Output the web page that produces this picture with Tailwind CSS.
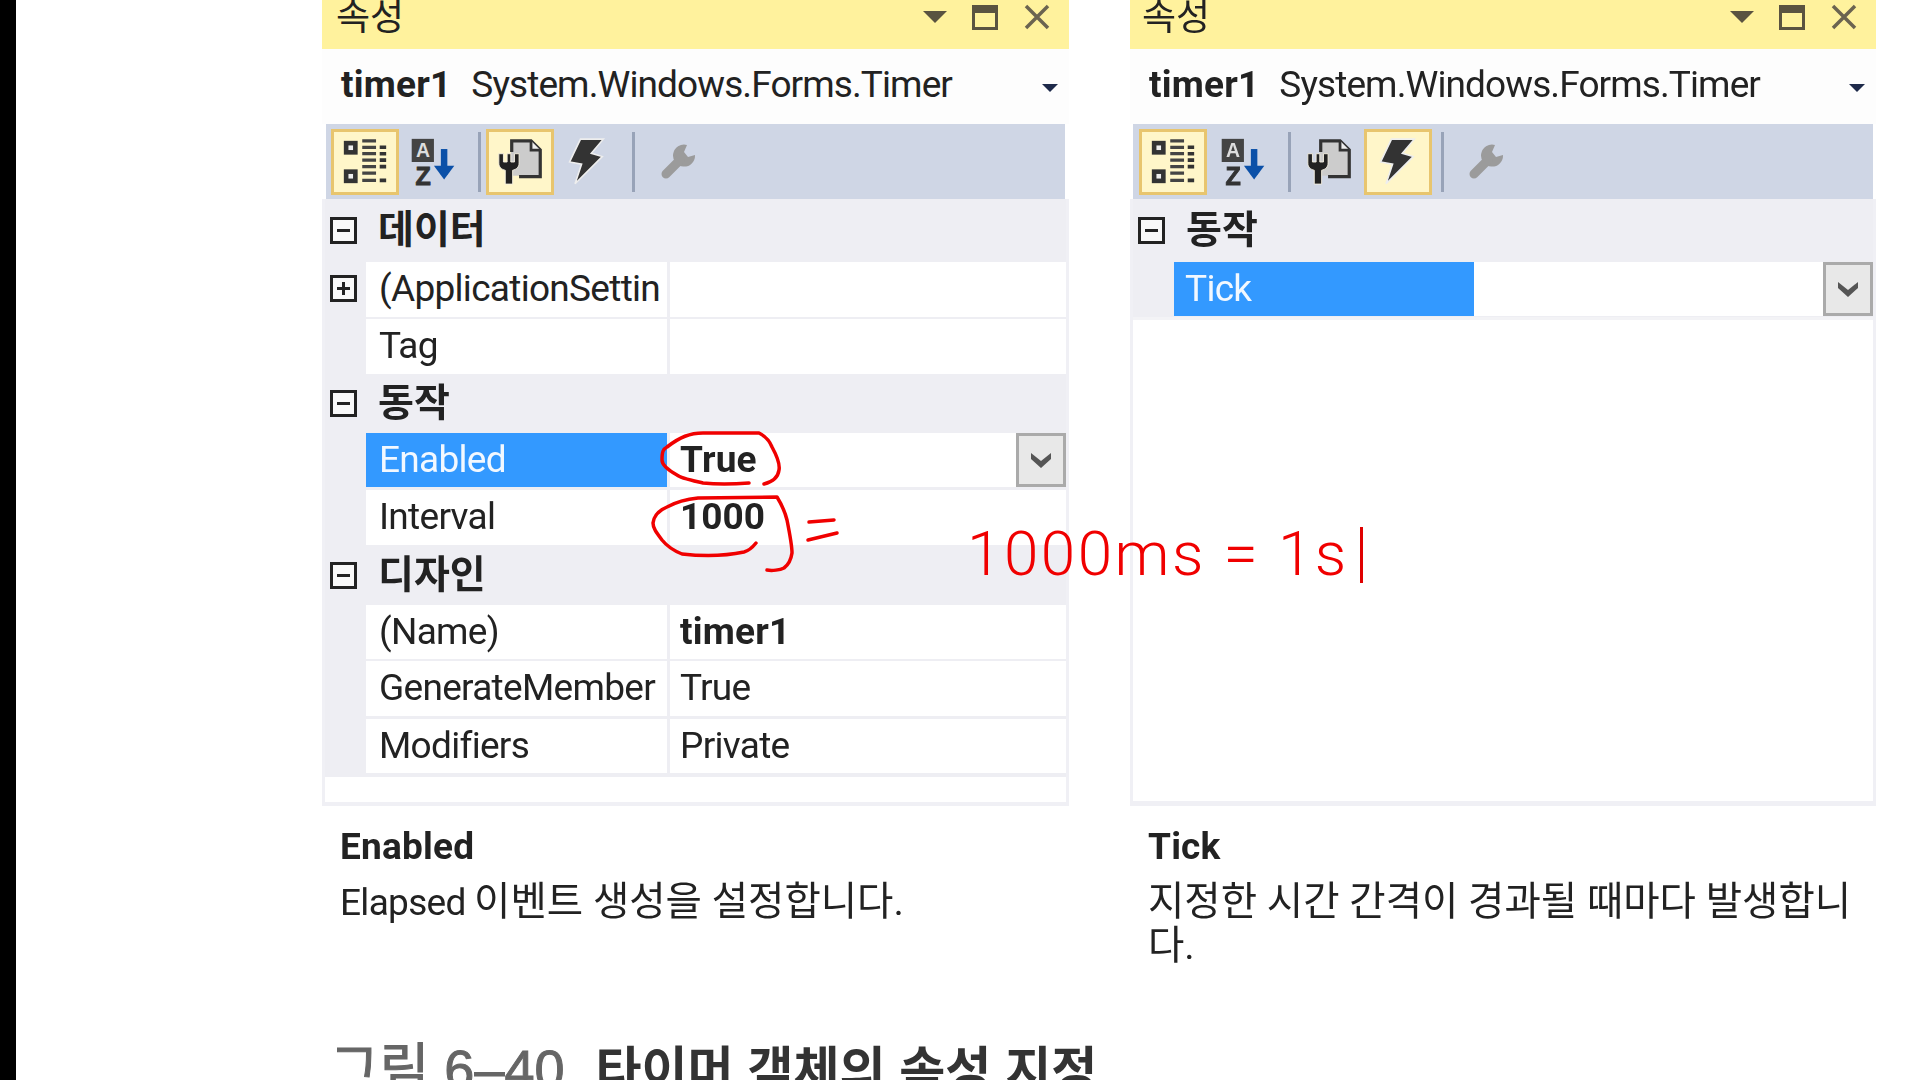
<!DOCTYPE html>
<html lang="ko">
  <head>
    <meta charset="UTF-8" />
    <title>속성</title>
    <script src="https://cdn.jsdelivr.net/npm/@tailwindcss/browser@4"></script>
  </head>
  <body class="relative w-[1920px] h-[1080px] overflow-hidden bg-white font-['Roboto','Noto_Sans_CJK_KR',sans-serif] text-[37px] leading-none tracking-[-0.7px] text-[#222]">
    <svg class="hidden">
      <symbol id="cats" viewBox="0 0 50 54">
        <rect x="2" y="4" width="15" height="15" fill="#333" /><rect x="7" y="9" width="5" height="5" fill="#eee" />
        <rect x="2" y="35" width="15" height="15" fill="#333" /><rect x="7" y="40" width="5" height="5" fill="#eee" />
        <path d="M22 4h15M22 11h15M22 18h15M22 25h15M22 32h15M22 39h15M22 47h15" stroke="#444" stroke-width="3.5" />
        <path d="M41 11h7M41 18h7M41 25h7M41 32h7M41 47h7" stroke="#333" stroke-width="4" />
      </symbol>
      <symbol id="sort" viewBox="0 0 48 54">
        <rect x="1" y="2" width="24" height="25" fill="#444" />
        <text x="13" y="22" text-anchor="middle" font-family="Liberation Sans" font-weight="700" font-size="21" fill="#ddd">A</text>
        <text x="13" y="52" text-anchor="middle" font-family="Liberation Sans" font-weight="700" font-size="27" fill="#333" stroke="#333" stroke-width="1">Z</text>
        <path d="M36 13v28" stroke="#0b50a8" stroke-width="7" /><path d="M25 31h22L36 46z" fill="#0b50a8" />
      </symbol>
      <symbol id="props" viewBox="0 0 50 54">
        <path d="M15 3h22l10 10v29H15z" fill="#ccc" />
        <path d="M16 16V4h21l10 10v29H24" fill="none" stroke="#333" stroke-width="3.5" />
        <path d="M37 4v10h10" fill="#eee" stroke="#333" stroke-width="3" />
        <path d="M2 18v10c0 5 3 7 7 8v15h8V36c4-1 7-3 7-8V18h-5v9h-4v-9h-4v9H7v-9z" fill="#222" stroke="#f4f0e0" stroke-width="1" />
      </symbol>
      <symbol id="bolt" viewBox="0 0 36 46">
        <path d="M12 2H33L22 15 32 18 7 43 13 25 2 23z" fill="#333" stroke="#eee" stroke-width="1.5" />
      </symbol>
      <symbol id="wrench" viewBox="0 0 36 36">
        <path d="M27 1A11 11 0 1 0 35 11L28 13L24 8Z" fill="#9b9b9b" />
        <path d="M6 30L20 16" stroke="#9b9b9b" stroke-width="9" stroke-linecap="round" />
      </symbol>
      <symbol id="chev" viewBox="0 0 22 18">
        <path d="M1 2l10 8 10-8v6l-10 9-10-9z" fill="#555" />
      </symbol>
    </svg>

    <div class="flex h-full blur-[0.5px]">
      <div class="w-4 shrink-0 bg-black"></div>

      <div class="flex items-start pl-[306px]">
        <!-- 왼쪽 속성 창 -->
        <section class="w-[747px] shrink-0">
          <div class="flex h-[49px] items-start justify-between bg-[#fff29d] pl-[14px] pr-[18px] overflow-hidden">
            <span class="-mt-[2px] text-[37px] leading-[40px] tracking-normal">속성</span>
            <div class="flex items-center gap-[25px] pt-[3px]">
              <span class="h-0 w-0 border-x-[12px] border-t-[12px] border-x-transparent border-t-[#5a5340]"></span>
              <span class="h-[25px] w-[26px] border-[3px] border-t-[8px] border-[#5a5340]"></span>
              <svg class="h-[28px] w-[28px]" viewBox="0 0 28 28"><path d="M3 3l22 22M25 3L3 25" stroke="#6b6450" stroke-width="3.5" /></svg>
            </div>
          </div>
          <div class="flex h-[75px] items-center bg-[#fdfdfd] pl-[19px] pr-[11px] pb-[5px]">
            <b class="font-bold tracking-[0.2px]">timer1</b>
            <span class="ml-[20px] flex-1 tracking-[-0.9px]">System.Windows.Forms.Timer</span>
            <span class="mt-[8px] h-0 w-0 border-x-[8px] border-t-[8px] border-x-transparent border-t-[#1e2a4a]"></span>
          </div>
          <div class="mx-[4px] flex h-[75px] items-center bg-[#cfd6e5] pl-[5px]">
            <div class="flex h-[66px] w-[68px] items-center justify-center border-[3px] border-[#e8c56e] bg-[#fff6c9]"><svg class="h-[50px] w-[46px]"><use href="#cats" /></svg></div>
            <svg class="ml-[11px] h-[50px] w-[46px]"><use href="#sort" /></svg>
            <div class="ml-[22px] h-[60px] w-[3px] bg-[#98a3b8]"></div>
            <div class="ml-[5px] flex h-[66px] w-[68px] items-center justify-center border-[3px] border-[#e8c56e] bg-[#fff6c9]"><svg class="h-[50px] w-[46px]"><use href="#props" /></svg></div>
            <svg class="ml-[13px] h-[50px] w-[40px]"><use href="#bolt" /></svg>
            <div class="ml-[25px] h-[60px] w-[3px] bg-[#98a3b8]"></div>
            <svg class="ml-[25px] h-[36px] w-[36px]"><use href="#wrench" /></svg>
          </div>

          <div class="h-[607px] border-x-[3px] border-b-[5px] border-[#f0f0f5] bg-[#eeeef3]">
            <div class="flex h-[63px] items-center">
              <span class="ml-[5px] flex h-[27px] w-[27px] items-center justify-center border-[3px] border-[#222] bg-[#f8f8f8]"><i class="h-[3px] w-[13px] bg-[#222]"></i></span>
              <b class="ml-[21px] text-[39px] font-bold tracking-normal">데이터</b>
            </div>
            <div class="flex h-[55px] items-stretch gap-[3px]">
              <span class="ml-[5px] mt-[13px] flex h-[27px] w-[27px] items-center justify-center border-[3px] border-[#222] bg-[#f8f8f8]">
                <svg class="h-[15px] w-[15px]" viewBox="0 0 15 15"><path d="M1 7.5h13M7.5 1v13" stroke="#222" stroke-width="3" /></svg>
              </span>
              <div class="ml-[6px] flex w-[301px] items-center bg-white pb-[2px] pl-[13px] overflow-hidden whitespace-nowrap">(ApplicationSettin</div>
              <div class="flex-1 bg-white"></div>
            </div>
            <div class="mt-[2px] flex h-[55px] items-stretch gap-[3px]">
              <div class="ml-[41px] flex w-[301px] items-center bg-white pb-[2px] pl-[13px]">Tag</div>
              <div class="flex-1 bg-white"></div>
            </div>
            <div class="flex h-[59px] items-center">
              <span class="ml-[5px] flex h-[27px] w-[27px] items-center justify-center border-[3px] border-[#222] bg-[#f8f8f8]"><i class="h-[3px] w-[13px] bg-[#222]"></i></span>
              <b class="ml-[21px] text-[39px] font-bold tracking-normal">동작</b>
            </div>
            <div class="flex h-[54px] items-stretch gap-[3px]">
              <div class="ml-[41px] flex w-[301px] items-center bg-[#3399ff] pb-[2px] pl-[13px] text-[#f2f8ff]">Enabled</div>
              <div class="flex flex-1 items-center justify-between bg-white pl-[10px]">
                <b class="pb-[2px] font-bold tracking-[0.2px]">True</b>
                <span class="flex h-[54px] w-[50px] items-center justify-center border-[3px] border-[#aaa] bg-[#e8e8e8]"><svg class="h-[18px] w-[22px]"><use href="#chev" /></svg></span>
              </div>
            </div>
            <div class="mt-[3px] flex h-[55px] items-stretch gap-[3px]">
              <div class="ml-[41px] flex w-[301px] items-center bg-white pb-[2px] pl-[13px]">Interval</div>
              <div class="flex flex-1 items-center bg-white pb-[2px] pl-[10px]"><b class="font-bold tracking-normal">1000</b></div>
            </div>
            <div class="flex h-[60px] items-center">
              <span class="ml-[5px] flex h-[27px] w-[27px] items-center justify-center border-[3px] border-[#222] bg-[#f8f8f8]"><i class="h-[3px] w-[13px] bg-[#222]"></i></span>
              <b class="ml-[21px] text-[39px] font-bold tracking-normal">디자인</b>
            </div>
            <div class="flex h-[54px] items-stretch gap-[3px]">
              <div class="ml-[41px] flex w-[301px] items-center bg-white pb-[2px] pl-[13px]">(Name)</div>
              <div class="flex flex-1 items-center bg-white pb-[2px] pl-[10px]"><b class="font-bold tracking-[0.2px]">timer1</b></div>
            </div>
            <div class="mt-[2px] flex h-[55px] items-stretch gap-[3px]">
              <div class="ml-[41px] flex w-[301px] items-center bg-white pb-[2px] pl-[13px] whitespace-nowrap">GenerateMember</div>
              <div class="flex flex-1 items-center bg-white pb-[2px] pl-[10px]">True</div>
            </div>
            <div class="mt-[3px] flex h-[54px] items-stretch gap-[3px]">
              <div class="ml-[41px] flex w-[301px] items-center bg-white pb-[2px] pl-[13px]">Modifiers</div>
              <div class="flex flex-1 items-center bg-white pb-[2px] pl-[10px]">Private</div>
            </div>
            <div class="mt-[4px] h-[25px] bg-white"></div>
          </div>

          <div class="pl-[18px] pt-[19px]">
            <b class="block font-bold leading-[44px] tracking-[0.2px]">Enabled</b>
            <p class="mt-[11px] leading-[44px]">Elapsed <span class="text-[39.5px] tracking-normal">이벤트 생성을 설정합니다.</span></p>
          </div>
        </section>

        <!-- 오른쪽 속성 창 -->
        <section class="ml-[61px] w-[746px] shrink-0">
          <div class="flex h-[49px] items-start justify-between bg-[#fff29d] pl-[12px] pr-[18px] overflow-hidden">
            <span class="-mt-[2px] text-[37px] leading-[40px] tracking-normal">속성</span>
            <div class="flex items-center gap-[25px] pt-[3px]">
              <span class="h-0 w-0 border-x-[12px] border-t-[12px] border-x-transparent border-t-[#5a5340]"></span>
              <span class="h-[25px] w-[26px] border-[3px] border-t-[8px] border-[#5a5340]"></span>
              <svg class="h-[28px] w-[28px]" viewBox="0 0 28 28"><path d="M3 3l22 22M25 3L3 25" stroke="#6b6450" stroke-width="3.5" /></svg>
            </div>
          </div>
          <div class="flex h-[75px] items-center bg-[#fdfdfd] pl-[19px] pr-[11px] pb-[5px]">
            <b class="font-bold tracking-[0.2px]">timer1</b>
            <span class="ml-[20px] flex-1 tracking-[-0.9px]">System.Windows.Forms.Timer</span>
            <span class="mt-[8px] h-0 w-0 border-x-[8px] border-t-[8px] border-x-transparent border-t-[#1e2a4a]"></span>
          </div>
          <div class="mx-[3px] flex h-[75px] items-center bg-[#cfd6e5] pl-[6px]">
            <div class="flex h-[66px] w-[68px] items-center justify-center border-[3px] border-[#e8c56e] bg-[#fff6c9]"><svg class="h-[50px] w-[46px]"><use href="#cats" /></svg></div>
            <svg class="ml-[13px] h-[50px] w-[46px]"><use href="#sort" /></svg>
            <div class="ml-[22px] h-[60px] w-[3px] bg-[#98a3b8]"></div>
            <svg class="ml-[15px] h-[50px] w-[46px]"><use href="#props" /></svg>
            <div class="ml-[12px] flex h-[66px] w-[68px] items-center justify-center border-[3px] border-[#e8c56e] bg-[#fff6c9]"><svg class="h-[50px] w-[40px]"><use href="#bolt" /></svg></div>
            <div class="ml-[9px] h-[60px] w-[3px] bg-[#98a3b8]"></div>
            <svg class="ml-[24px] h-[36px] w-[36px]"><use href="#wrench" /></svg>
          </div>

          <div class="h-[607px] border-x-[3px] border-b-[5px] border-[#f0f0f5] bg-white">
            <div class="flex h-[63px] items-center bg-[#eeeef3]">
              <span class="ml-[5px] flex h-[27px] w-[27px] items-center justify-center border-[3px] border-[#222] bg-[#f8f8f8]"><i class="h-[3px] w-[13px] bg-[#222]"></i></span>
              <b class="ml-[21px] text-[39px] font-bold tracking-normal">동작</b>
            </div>
            <div class="flex h-[55px] items-stretch bg-[#eeeef3] pb-[1px]">
              <div class="ml-[41px] flex w-[300px] items-center bg-[#3399ff] pb-[2px] pl-[11px] text-[#f2f8ff]">Tick</div>
              <div class="flex flex-1 items-center justify-end bg-white">
                <span class="flex h-[54px] w-[50px] items-center justify-center border-[3px] border-[#aaa] bg-[#e8e8e8]"><svg class="h-[18px] w-[22px]"><use href="#chev" /></svg></span>
              </div>
            </div>
            <div class="h-[3px] bg-[#f3f3f6]"></div>
          </div>

          <div class="pl-[18px] pr-[10px] pt-[19px]">
            <b class="block font-bold leading-[44px] tracking-[0.2px]">Tick</b>
            <p class="mt-[11px] text-[39.5px] leading-[44px] tracking-normal whitespace-nowrap">지정한 시간 간격이 경과될 때마다 발생합니<br />다.</p>
          </div>
        </section>
      </div>
    </div>

    <!-- 캡션 (하단에서 잘림) -->
    <p class="absolute left-[330px] top-[1036px] whitespace-nowrap leading-[66px] tracking-normal blur-[0.7px] font-['Liberation_Sans','Noto_Sans_CJK_KR',sans-serif]">
      <span class="text-[54px] text-[#666] [-webkit-text-stroke:1px_#666]">그림 6–40</span><b class="ml-[31px] text-[50px] text-[#333]">타이머 객체의 속성 지정</b>
    </p>

    <!-- 빨간 펜 표시 -->
    <svg class="absolute left-0 top-0 h-[1080px] w-[1920px] pointer-events-none" viewBox="0 0 1920 1080" fill="none" stroke="#f00000" stroke-width="3.5" stroke-linecap="round" stroke-linejoin="round">
      <path d="M749 483C725 485 712 484 703 483C690 480 680 478 677 475C668 470 662 465 662 460C662 452 663 449 667 447C680 437 690 433 703 433L759 433C765 436 770 442 772 447C778 458 780 465 779 470C778 478 772 482 764 484" />
      <path d="M756 543C752 548 748 551 744 552C725 556 700 556 682 554C672 550 666 545 662 540C656 532 653 528 653 523C654 515 660 510 667 507C678 501 688 499 698 498L777 497C782 505 785 512 787 520C790 535 792 545 792 553C791 560 788 565 784 568C780 570 772 571 767 570" />
      <path d="M809 522L834 520M808 540L837 533" />
    </svg>
    <span class="absolute left-[967px] top-[524px] text-[62px] leading-[60px] tracking-[2.5px] text-[#f00000] font-['Roboto',sans-serif] font-light">1000ms = 1s</span>
    <div class="absolute left-[1360px] top-[527px] h-[56px] w-[3px] bg-[#e00000]"></div>
  </body>
</html>
